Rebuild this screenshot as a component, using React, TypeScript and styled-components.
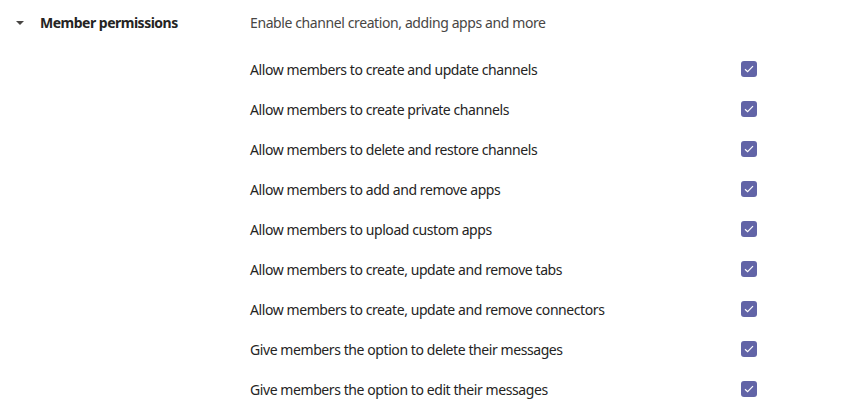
import styled, { createGlobalStyle } from "styled-components";

const Global = createGlobalStyle`
  body {
    margin: 0;
    background: #ffffff;
    font-family: "Segoe UI", "Noto Sans", sans-serif;
    color: #252423;
  }
`;

const Page = styled.div`
  display: grid;
  grid-template-columns: 40px 210px 507px;
  padding-top: 13px;
`;

const Caret = styled.div`
  display: flex;
  justify-content: center;
  padding-top: 8px;
  padding-left: 6px;
  box-sizing: border-box;
  width: 34px;
`;

const Title = styled.div`
  font-size: 14px;
  font-weight: 700;
  line-height: 20px;
  letter-spacing: -0.5px;
  color: #252423;
`;

const Body = styled.div`
  display: flex;
  flex-direction: column;
`;

const Description = styled.div`
  font-size: 14px;
  line-height: 20px;
  letter-spacing: -0.4px;
  color: #484644;
  margin-bottom: 16px;
`;

const Row = styled.label`
  display: flex;
  align-items: center;
  justify-content: space-between;
  height: 40px;
  font-size: 14px;
  letter-spacing: -0.42px;
  color: #252423;
`;

const Box = styled.span`
  width: 16px;
  height: 16px;
  border-radius: 3px;
  background: #6264a7;
  display: flex;
  align-items: center;
  justify-content: center;
`;

const items = [
  "Allow members to create and update channels",
  "Allow members to create private channels",
  "Allow members to delete and restore channels",
  "Allow members to add and remove apps",
  "Allow members to upload custom apps",
  "Allow members to create, update and remove tabs",
  "Allow members to create, update and remove connectors",
  "Give members the option to delete their messages",
  "Give members the option to edit their messages",
];

export default function App() {
  return (
    <>
      <Global />
      <Page>
        <Caret>
          <svg width="8" height="4" viewBox="0 0 8 4">
            <path d="M0 0 L8 0 L4 4 Z" fill="#484644" />
          </svg>
        </Caret>
        <Title>Member permissions</Title>
        <Body>
          <Description>Enable channel creation, adding apps and more</Description>
          {items.map((t) => (
            <Row key={t}>
              <span>{t}</span>
              <Box>
                <svg width="10" height="8" viewBox="0 0 10 8">
                  <path d="M1 4.2 L3.6 6.6 L9 1.2" stroke="#fff" strokeWidth="1.2" fill="none" />
                </svg>
              </Box>
            </Row>
          ))}
        </Body>
      </Page>
    </>
  );
}
